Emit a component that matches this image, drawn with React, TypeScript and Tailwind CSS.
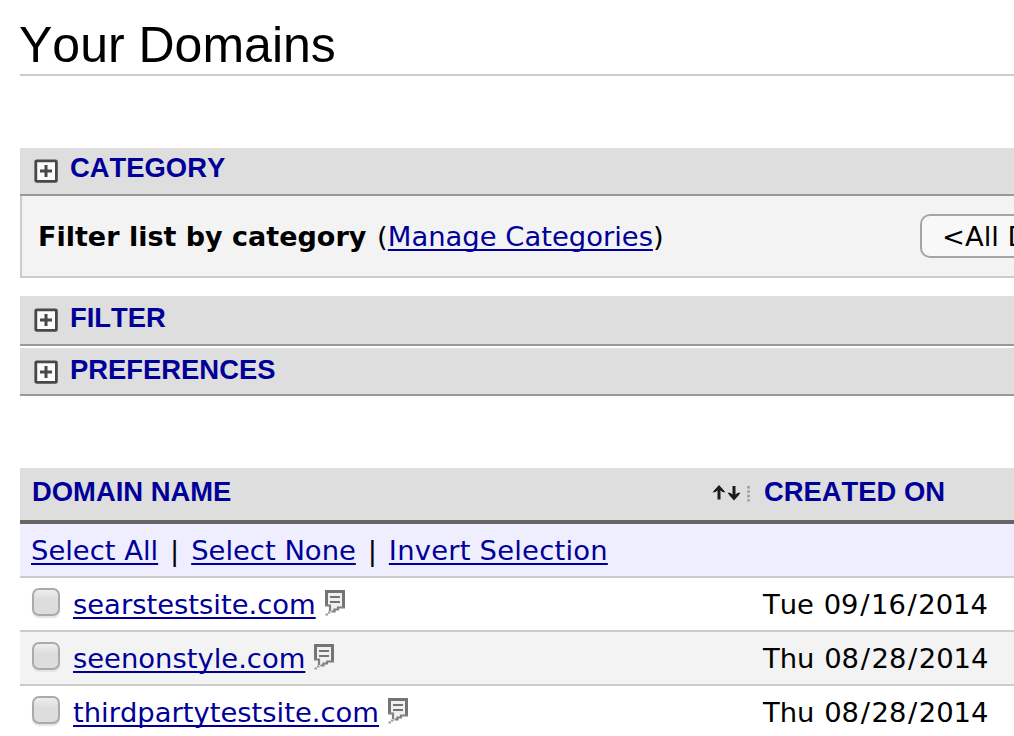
import React from 'react';

const sans = "font-['Liberation_Sans',Arial,sans-serif]";
const link = 'text-[#000099] underline decoration-2 underline-offset-[3px] [text-decoration-skip-ink:none]';

function PlusBox() {
  return (
    <svg width="24" height="24" viewBox="0 0 24 24" className="shrink-0">
      <rect x="1.8" y="1.8" width="20.6" height="20.6" rx="1" fill="#fbfbfb" stroke="#484848" strokeWidth="2.8" />
      <path d="M6 12H18M12 6V18" stroke="#484848" strokeWidth="3" fill="none" />
    </svg>
  );
}

function SortArrows() {
  return (
    <svg width="40" height="18" viewBox="0 0 40 18" className="mb-0.5 shrink-0">
      <path d="M7 15.5V3" stroke="#1c1c1c" strokeWidth="3" fill="none" />
      <path d="M7 1L11.5 6L13.5 8.5L10.5 8L7 5.5L3.5 8L0.5 8.5L2.5 6Z" fill="#1c1c1c" />
      <path d="M22 2V14" stroke="#1c1c1c" strokeWidth="3" fill="none" />
      <path d="M22 16.5L26.5 11.5L28.5 8.5L25.5 9L22 11.5L18.5 9L15.5 8.5L17.5 11.5Z" fill="#1c1c1c" />
      <path d="M36.5 2V18" stroke="#999999" strokeWidth="2.6" strokeDasharray="2.4 2" />
    </svg>
  );
}

function NoteIcon() {
  return (
    <svg width="20" height="26" viewBox="0 0 20 26" className="shrink-0">
      <path d="M1.3 1.3H18.7V17.5H14L8 20.5L2 24.5L5 20V16H1.3Z" fill="#f0f0f0" stroke="none" />
      <path d="M1.5 16V1.5H18.5V18" stroke="#747474" strokeWidth="3" fill="none" />
      <path d="M0 15.5H5V21M20 17.5H13V19.5H9.5V21.5H6.5" stroke="#808080" strokeWidth="2.2" fill="none" />
      <path d="M0.5 24.5H3M3 22.5H5.5" stroke="#999999" strokeWidth="2" />
      <path d="M5 7H15M5 12H15" stroke="#747474" strokeWidth="2" />
    </svg>
  );
}

function Bar({ label, className, text }: { label: string; className: string; text: string }) {
  return (
    <div className={`flex items-center border-b-2 border-[#999999] bg-[#dedede] pl-[14px] ${className}`}>
      <PlusBox />
      <span className={`ml-3 ${sans} leading-8 font-bold whitespace-nowrap text-[#000099] ${text}`}>{label}</span>
    </div>
  );
}

function DateText({ day, parts }: { day: string; parts: string[] }) {
  return (
    <span className="mt-0.5 whitespace-nowrap">
      {day} <span className="ml-px">{parts[0]}</span>
      <span className="px-[1.6px]">/</span>
      {parts[1]}
      <span className="px-[1.6px]">/</span>
      {parts[2]}
    </span>
  );
}

const rows = [
  { name: 'searstestsite.com', day: 'Tue', parts: ['09', '16', '2014'], bg: 'bg-white' },
  { name: 'seenonstyle.com', day: 'Thu', parts: ['08', '28', '2014'], bg: 'bg-[#f3f3f3]' },
  { name: 'thirdpartytestsite.com', day: 'Thu', parts: ['08', '28', '2014'], bg: 'bg-white' },
];

export default function App() {
  return (
    <div className="h-[736px] w-[1014px] overflow-hidden bg-white pl-5 font-['DejaVu_Sans',Verdana,sans-serif] text-[27.4px] leading-8 text-black [font-kerning:none]">
      <h1 className={`h-[76px] border-b-2 border-[#cccccc] pt-[17px] ${sans} text-[50px] leading-[56px] whitespace-nowrap`}>
        <span className="-ml-px">Your Domains</span>
      </h1>

      <Bar label="CATEGORY" className="mt-[72px] h-12" text="mb-[6px]" />
      <div className="flex h-[82px] items-center border-b-2 border-l-2 border-[#cccccc] bg-[#f3f3f3] pl-4 whitespace-nowrap">
        <div className="mt-0.5 w-[882px] shrink-0">
          <b className="mr-0.5 text-[27px]">Filter list by category</b> (<a className={link}>Manage Categories</a>)
        </div>
        <div className="flex h-11 w-80 shrink-0 items-center rounded-[10px] border-2 border-[#a5a5a5] bg-[#f8f8f8] pt-0.5 pl-5">
          &lt;All Domains&gt;
        </div>
      </div>
      <Bar label="FILTER" className="mt-[18px] h-[50px]" text="mb-[4px]" />
      <Bar label="PREFERENCES" className="mt-0.5 h-12 pt-px" text="mb-[3px]" />

      <div className={`mt-[72px] flex h-14 items-center border-b-4 border-[#666666] bg-[#dedede] pl-3 ${sans} font-bold whitespace-nowrap text-[#000099]`}>
        <span className="mb-1 w-[680px]">DOMAIN NAME</span>
        <SortArrows />
        <span className="mb-1 ml-3">CREATED ON</span>
      </div>
      <div className="flex h-[54px] items-center border-b-2 border-[#cccccc] bg-[#eeeeff] pt-0.5 pl-[11px] whitespace-nowrap">
        <a className={link}>Select All</a>
        <span className="w-[33px] text-center">|</span>
        <a className={link}>Select None</a>
        <span className="w-[33px] text-center">|</span>
        <a className={`tracking-[0.22px] ${link}`}>Invert Selection</a>
      </div>
      {rows.map((r) => (
        <div key={r.name} className={`flex h-[54px] items-center border-b-2 border-[#cccccc] pl-3 ${r.bg}`}>
          <div className="flex w-[731px] shrink-0 items-center">
            <span className="mr-[13px] mb-1 h-7 w-7 shrink-0 rounded-[7px] border-2 border-[#aaaaaa] bg-linear-to-b from-[#eeeeee] to-[#dddddd] to-40% shadow-[0_2px_1px_#e4e4e4]" />
            <a className={`mt-0.5 whitespace-nowrap ${link}`}>{r.name}</a>
            <span className="mb-0.5 ml-[9px]">
              <NoteIcon />
            </span>
          </div>
          <DateText day={r.day} parts={r.parts} />
        </div>
      ))}
    </div>
  );
}
